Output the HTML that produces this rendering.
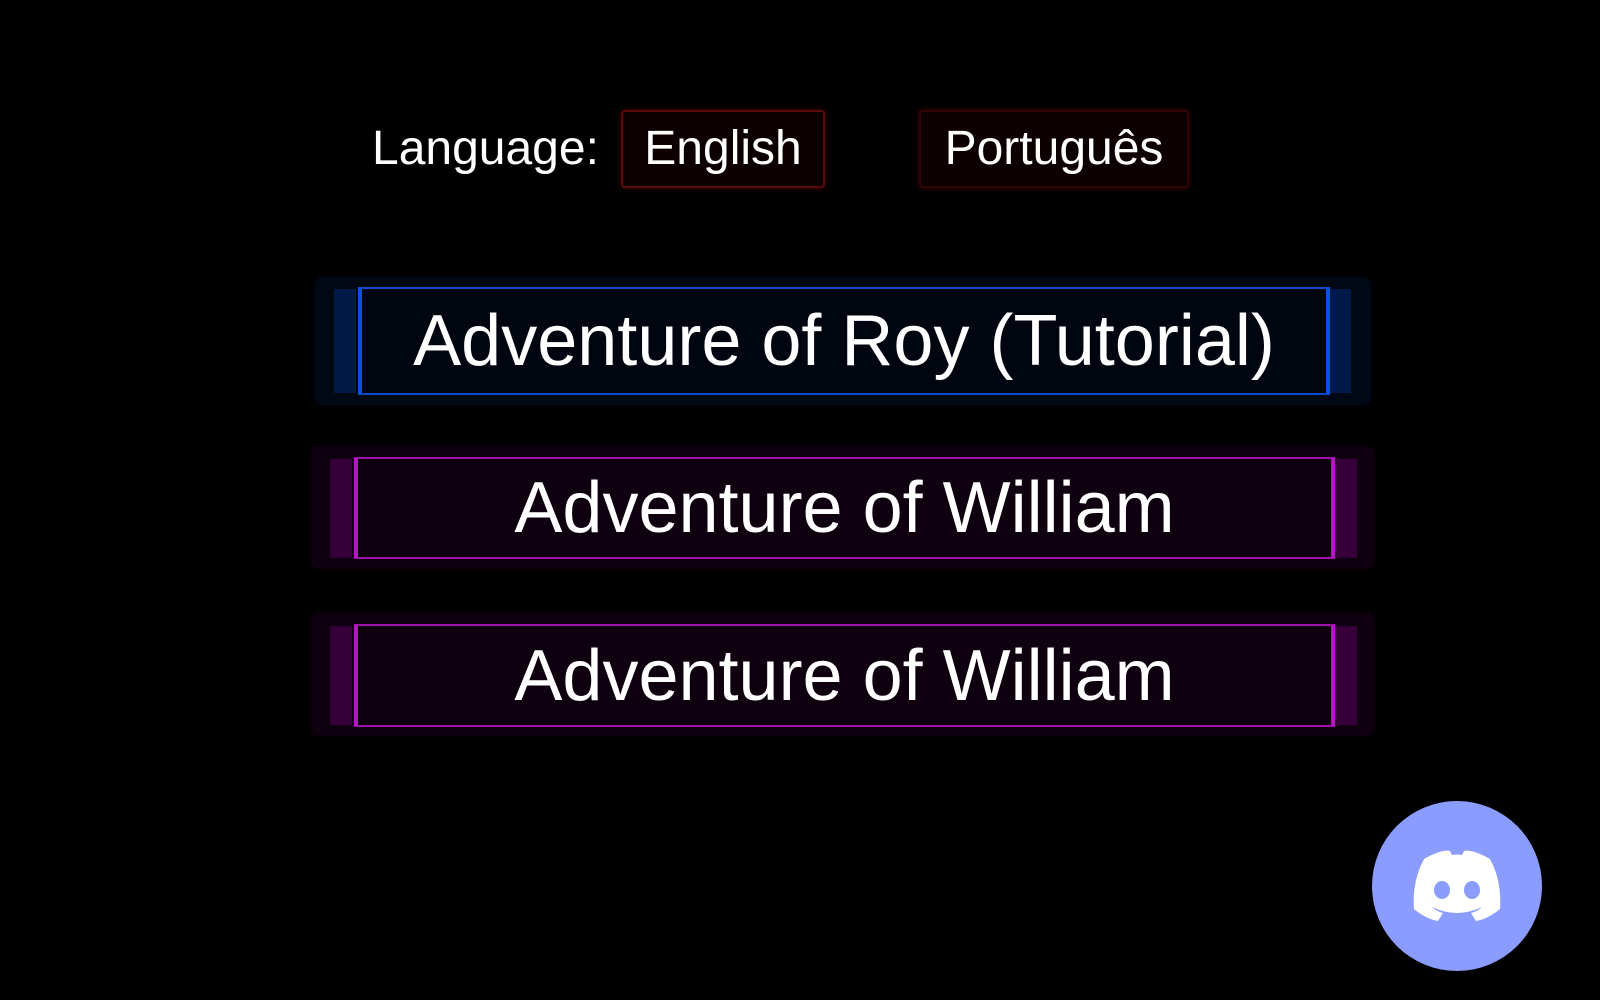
<!DOCTYPE html>
<html><head><style>
html,body{margin:0;width:1600px;height:1000px;background:#000;overflow:hidden;font-family:"Liberation Sans",Arial,sans-serif;color:#fff}
.a{position:absolute}
.lang{left:372px;top:119px;font-size:48px;line-height:60px}
.lb{position:absolute;border:2px solid #5a0a0a;background:#0d0000;box-shadow:0 0 6px #400;border-radius:4px;font-size:48px;line-height:74px;text-align:center}
.outer{position:absolute}
.inner{position:absolute;display:flex;align-items:center;justify-content:center;font-size:72px;box-sizing:border-box}
</style></head><body>
<div class="a lang">Language:</div>
<div class="lb" style="left:621px;top:110px;width:200px;height:74px">English</div>
<div class="lb" style="left:919px;top:110px;width:266px;height:74px;border-color:#300505">Português</div>

<div class="outer" style="left:318px;top:280px;width:1050px;height:122px;background:#000814;box-shadow:0 0 6px #001a40"></div>
<div class="outer" style="left:334px;top:289px;width:1017px;height:104px;border-left:22px solid #021a48;border-right:22px solid #021a48;box-sizing:border-box"></div>
<div class="inner" style="left:358px;top:287px;width:972px;height:108px;background:#01050f;border:2px solid #0a4ad0;border-left:4px solid #0a50e0;border-right:4px solid #0a50e0">Adventure of Roy (Tutorial)</div>

<div class="outer" style="left:314px;top:449px;width:1058px;height:117px;background:#0f0010;box-shadow:0 0 6px #300030"></div>
<div class="outer" style="left:330px;top:459px;width:1027px;height:99px;border-left:22px solid #35003a;border-right:22px solid #35003a;box-sizing:border-box"></div>
<div class="inner" style="left:354px;top:457px;width:981px;height:102px;background:#0f0010;border:2px solid #a010b0;border-left:4px solid #b018c0;border-right:4px solid #b018c0">Adventure of William</div>

<div class="outer" style="left:314px;top:616px;width:1058px;height:117px;background:#0f0010;box-shadow:0 0 6px #300030"></div>
<div class="outer" style="left:330px;top:626px;width:1027px;height:99px;border-left:22px solid #35003a;border-right:22px solid #35003a;box-sizing:border-box"></div>
<div class="inner" style="left:354px;top:624px;width:981px;height:103px;background:#0f0010;border:2px solid #a010b0;border-left:4px solid #b018c0;border-right:4px solid #b018c0">Adventure of William</div>

<svg class="a" style="left:1372px;top:801px" width="170" height="170" viewBox="0 0 170 170">
<circle cx="85" cy="85" r="85" fill="#8b9cff"/>
<path d="M52 58 Q70 48 78 50 L80 54 Q85 53 90 54 L92 50 Q100 48 118 58 Q130 80 128 108 Q116 118 104 120 L99 112 Q106 110 110 106 Q85 118 60 106 Q64 110 71 112 L66 120 Q54 118 42 108 Q40 80 52 58Z" fill="#fff"/>
<ellipse cx="70" cy="89" rx="8" ry="9" fill="#8b9cff"/>
<ellipse cx="100" cy="89" rx="8" ry="9" fill="#8b9cff"/>
</svg>
</body></html>
